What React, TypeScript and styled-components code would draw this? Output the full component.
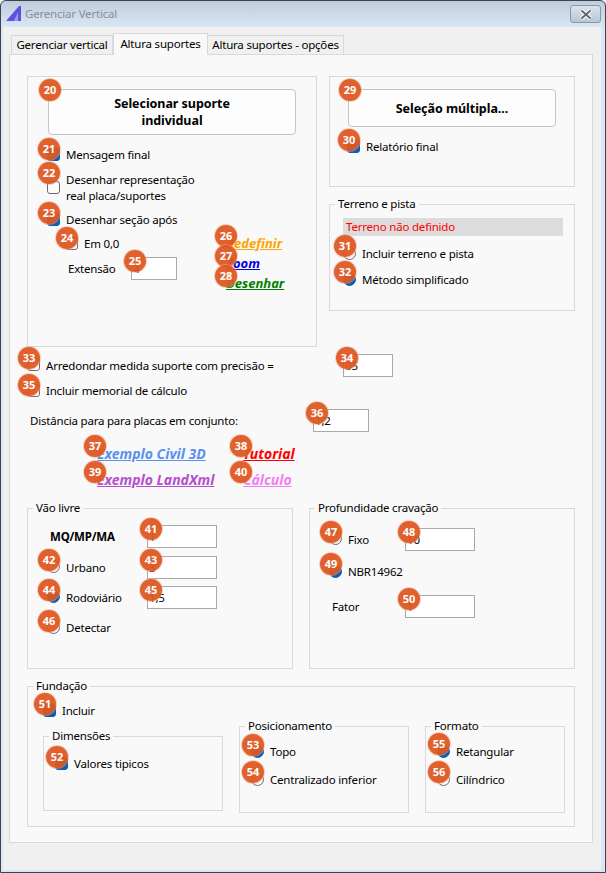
import React from "react";
import styled, { createGlobalStyle } from "styled-components";

const GlobalStyle = createGlobalStyle`
  html, body {
    margin: 0;
    padding: 0;
    background: #f0f0f0;
  }
  body {
    font-family: "Noto Sans", "Liberation Sans", sans-serif;
    font-size: 11.5px;
    letter-spacing: -0.2px;
    line-height: 16px;
    color: #000;
  }
`;

const Frame = styled.div`
  box-sizing: border-box;
  width: 606px;
  height: 873px;
  border: 1px solid #3f4349;
  border-radius: 6px 6px 0 0;
  background: linear-gradient(#bfcddd, #d9e6f3 26px);
  padding: 0 4px 2px 2px;
  display: flex;
  flex-direction: column;
  overflow: hidden;
`;

const TitleBar = styled.div`
  height: 26px;
  flex: none;
  display: flex;
  align-items: center;
  padding-left: 3px;
  color: #8b8f96;
  position: relative;
`;

const TitleText = styled.span`
  margin-left: 3px;
`;

const CloseButton = styled.button`
  position: absolute;
  right: 0;
  top: 4px;
  box-sizing: border-box;
  width: 31px;
  height: 18px;
  padding: 0;
  border: 1px solid #8a97a8;
  border-radius: 3px;
  background: linear-gradient(#dbe3ec, #b9c6d6);
  display: flex;
  align-items: center;
  justify-content: center;
`;

const Body = styled.div`
  flex: 1;
  background: #f0f0f0;
  padding: 6px 8px 0 6px;
  min-height: 0;
`;

const TabBar = styled.div`
  display: flex;
  align-items: flex-end;
  height: 21px;
  padding-left: 3px;
`;

const Tab = styled.div<{ $active?: boolean; $w: number }>`
  box-sizing: border-box;
  width: ${(p) => p.$w}px;
  height: ${(p) => (p.$active ? "22px" : "19px")};
  line-height: ${(p) => (p.$active ? "19px" : "18px")};
  text-align: center;
  border: 1px solid #d9d9d9;
  border-bottom: none;
  margin-left: ${(p) => (p.$active ? "0" : "-1px")};
  background: ${(p) => (p.$active ? "#f9f9f9" : "#f0f0f0")};
  position: relative;
  z-index: ${(p) => (p.$active ? 1 : 0)};
  margin-bottom: ${(p) => (p.$active ? "-1px" : "0")};
  white-space: nowrap;
`;

const Panel = styled.div`
  box-sizing: border-box;
  height: 789px;
  border: 1px solid #d9d9d9;
  background: #f9f9f9;
  padding: 21px 19px 0 17px;
`;

const TopRow = styled.div`
  display: flex;
  gap: 12px;
  height: 271px;
`;

const Group = styled.div<{ $w: number; $h: number; $mt?: number }>`
  box-sizing: border-box;
  position: relative;
  width: ${(p) => p.$w}px;
  height: ${(p) => p.$h}px;
  margin-top: ${(p) => p.$mt ?? 0}px;
  flex: none;
  border: 1px solid #d9d9d9;
`;

const Caption = styled.span`
  position: absolute;
  left: 5px;
  top: -9px;
  padding: 0 3px;
  background: #f9f9f9;
  white-space: nowrap;
`;

const Stack = styled.div<{ $px?: number; $pt?: number }>`
  display: flex;
  flex-direction: column;
  align-items: flex-start;
  padding: ${(p) => p.$pt ?? 0}px 0 0 ${(p) => p.$px ?? 0}px;
`;

const RightColumn = styled.div`
  display: flex;
  flex-direction: column;
  gap: 17px;
`;

const BigButton = styled.button<{ $w: number; $h: number }>`
  box-sizing: border-box;
  position: relative;
  width: ${(p) => p.$w}px;
  height: ${(p) => p.$h}px;
  margin-left: 1px;
  border: 1px solid #c4c4c4;
  border-radius: 4px;
  background: #fdfdfd;
  font: bold 12.5px/17px "Noto Sans", "Liberation Sans", sans-serif;
  letter-spacing: -0.05px;
  color: #000;
  padding: 0;
`;

const Option = styled.label<{ $mt?: number; $ml?: number }>`
  display: flex;
  align-items: center;
  gap: 6px;
  margin-top: ${(p) => p.$mt ?? 0}px;
  margin-left: ${(p) => p.$ml ?? 0}px;
  min-height: 16px;
  white-space: nowrap;
`;

const Mark = styled.span<{ $radio?: boolean; $on?: boolean }>`
  box-sizing: border-box;
  position: relative;
  display: block;
  width: 13px;
  height: 13px;
  flex: none;
  top: -1px;
  border-radius: ${(p) => (p.$radio ? "50%" : "3px")};
  border: 1px solid ${(p) => (p.$on ? "#0f5cb0" : "#6b6b6b")};
  background: ${(p) => (p.$on ? "#0f5cb0" : "#fdfdfd")};
`;

const Badge = styled.span<{ $dx?: number; $dy?: number }>`
  box-sizing: border-box;
  position: absolute;
  left: ${(p) => p.$dx ?? -10}px;
  top: ${(p) => p.$dy ?? -12}px;
  width: 22px;
  height: 22px;
  border-radius: 50%;
  background: #df5822;
  box-shadow: 0 0 0 1px rgba(240, 170, 140, 0.55);
  color: #fff;
  font: bold 11px/21px "Noto Sans", "Liberation Sans", sans-serif;
  font-style: normal;
  letter-spacing: 0;
  text-align: center;
  text-decoration: none;
  display: block;
  opacity: 0.94;
  z-index: 2;
`;

const FieldBox = styled.span<{ $w?: number }>`
  box-sizing: border-box;
  position: relative;
  display: block;
  flex: none;
  width: ${(p) => p.$w ?? 70}px;
  height: 23px;
  border: 1px solid #a9a9a9;
  background: #fff;
  padding-left: 1px;
  line-height: 21px;
`;

const Split = styled.div`
  display: flex;
  margin-top: 2px;
  width: 100%;
`;

const LinkColumn = styled.div`
  display: flex;
  flex-direction: column;
  margin-left: 49px;
  padding-top: 3px;
  align-items: flex-start;
`;

const Jump = styled.a<{ $color: string; $big?: boolean }>`
  position: relative;
  display: block;
  font-weight: bold;
  font-style: italic;
  font-size: ${(p) => (p.$big ? 14 : 13)}px;
  letter-spacing: 0;
  line-height: 20px;
  text-decoration: underline;
  color: ${(p) => p.$color};
  white-space: nowrap;
`;

const FieldRow = styled.div<{ $mt?: number; $ml?: number; $col?: number }>`
  display: grid;
  grid-template-columns: ${(p) => p.$col ?? 100}px auto;
  align-items: center;
  margin-top: ${(p) => p.$mt ?? 0}px;
  margin-left: ${(p) => p.$ml ?? 0}px;
`;

const Plain = styled.span<{ $bold?: boolean }>`
  font-weight: ${(p) => (p.$bold ? "bold" : "normal")};
  white-space: nowrap;
`;

const WarnBar = styled.div`
  box-sizing: border-box;
  height: 18px;
  width: 220px;
  margin: 13px 0 0 13px;
  padding-left: 3px;
  background: #dcdcdc;
  color: #f00;
  line-height: 18px;
`;

const Loose = styled.div`
  display: flex;
  flex-direction: column;
  align-items: flex-start;
  padding-top: 7px;
  position: relative;
`;

const LinkGrid = styled.div`
  display: grid;
  grid-template-columns: 146px auto;
  row-gap: 6px;
  margin: 12px 0 0 70px;
  justify-items: start;
`;

const ColumnsRow = styled.div<{ $mt: number }>`
  display: flex;
  gap: 16px;
  margin-top: ${(p) => p.$mt}px;
`;

const Inner = styled.div`
  display: flex;
  align-items: flex-start;
  gap: 16px;
  margin: 7px 0 0 15px;
`;

type OptProps = {
  n: number;
  label: React.ReactNode;
  radio?: boolean;
  on?: boolean;
  mt?: number;
  ml?: number;
  dy?: number;
};

// checkbox or radio with its numbered marker on top
function Opt({ n, label, radio, on, mt, ml, dy }: OptProps) {
  return (
    <Option $mt={mt} $ml={ml}>
      <Mark $radio={radio} $on={on}>
        <Badge $dy={dy}>{n}</Badge>
      </Mark>
      <span>{label}</span>
    </Option>
  );
}

function Field({ n, value, w }: { n: number; value?: string; w?: number }) {
  return (
    <FieldBox $w={w}>
      {value}
      <Badge $dx={-8} $dy={-8}>{n}</Badge>
    </FieldBox>
  );
}

export default function App() {
  return (
    <>
      <GlobalStyle />
      <Frame>
        <TitleBar>
          <svg width="16" height="16" viewBox="0 0 16 16">
            <path d="M0 15 L13 0 L15 0 L15 15 Z" fill="#5a52e0" />
            <path d="M8 15 L12 6 L12 15 Z" fill="#9c98ee" />
          </svg>
          <TitleText>Gerenciar Vertical</TitleText>
          <CloseButton aria-label="Fechar">
            <svg width="14" height="11" viewBox="0 0 14 11">
              <path d="M2.5 1.5 L11.5 9.5 M11.5 1.5 L2.5 9.5" stroke="#fff" strokeWidth="3.8" />
              <path d="M2.5 1.5 L11.5 9.5 M11.5 1.5 L2.5 9.5" stroke="#5d6672" strokeWidth="1.8" />
            </svg>
          </CloseButton>
        </TitleBar>
        <Body>
          <TabBar>
            <Tab $w={102}>Gerenciar vertical</Tab>
            <Tab $w={95} $active>Altura suportes</Tab>
            <Tab $w={137}>Altura suportes - opções</Tab>
          </TabBar>
          <Panel>
            <TopRow>
              <Group $w={290} $h={271}>
                <Stack $px={19} $pt={12}>
                  <BigButton $w={248} $h={46}>
                    Selecionar suporte
                    <br />
                    individual
                    <Badge $dx={-10} $dy={-11}>20</Badge>
                  </BigButton>
                  <Opt n={21} label="Mensagem final" on mt={12} dy={-11} />
                  <Opt
                    n={22}
                    label={
                      <>
                        Desenhar representação
                        <br />
                        real placa/suportes
                      </>
                    }
                    mt={9}
                    dy={-20}
                  />
                  <Opt n={23} label="Desenhar seção após" on mt={8} />
                  <Split>
                    <Stack $px={18}>
                      <Opt n={24} label="Em 0,0" mt={6} dy={-11} />
                      <FieldRow $mt={5} $ml={3} $col={63}>
                        <Plain>Extensão</Plain>
                        <Field n={25} w={46} value="4" />
                      </FieldRow>
                    </Stack>
                    <LinkColumn>
                      <Jump $color="#ffa500">
                        Redefinir
                        <Badge $dx={-11} $dy={-8}>26</Badge>
                      </Jump>
                      <Jump $color="#0000e0">
                        Zoom
                        <Badge $dx={-11} $dy={-8}>27</Badge>
                      </Jump>
                      <Jump $color="#008000">
                        Desenhar
                        <Badge $dx={-11} $dy={-8}>28</Badge>
                      </Jump>
                    </LinkColumn>
                  </Split>
                </Stack>
              </Group>
              <RightColumn>
                <Group $w={246} $h={111}>
                  <Stack $px={17} $pt={12}>
                    <BigButton $w={208} $h={38}>
                      Seleção múltipla...
                      <Badge $dx={-10} $dy={-11}>29</Badge>
                    </BigButton>
                    <Opt n={30} label="Relatório final" on mt={12} />
                  </Stack>
                </Group>
                <Group $w={246} $h={107}>
                  <Caption>Terreno e pista</Caption>
                  <WarnBar>Terreno não definido</WarnBar>
                  <Stack $px={13}>
                    <Opt n={31} label="Incluir terreno e pista" radio mt={10} dy={-13} />
                    <Opt n={32} label="Método simplificado" radio on mt={10} dy={-13} />
                  </Stack>
                </Group>
              </RightColumn>
            </TopRow>
            <Loose>
              <FieldRow $col={316}>
                <Opt n={33} label="Arredondar medida suporte com precisão =" />
                <Field n={34} w={50} value="05" />
              </FieldRow>
              <Opt n={35} label="Incluir memorial de cálculo" mt={6} dy={-11} />
              <FieldRow $mt={10} $ml={3} $col={283}>
                <Plain>Distância para para placas em conjunto:</Plain>
                <Field n={36} w={56} value="1,2" />
              </FieldRow>
            </Loose>
            <LinkGrid>
              <Jump $color="#5b8ff0" $big>
                Exemplo Civil 3D
                <Badge $dx={-13} $dy={-9}>37</Badge>
              </Jump>
              <Jump $color="#f00" $big>
                Tutorial
                <Badge $dx={-13} $dy={-9}>38</Badge>
              </Jump>
              <Jump $color="#b44fd0" $big>
                Exemplo LandXml
                <Badge $dx={-13} $dy={-9}>39</Badge>
              </Jump>
              <Jump $color="#f080f0" $big>
                Cálculo
                <Badge $dx={-13} $dy={-9}>40</Badge>
              </Jump>
            </LinkGrid>
            <ColumnsRow $mt={18}>
              <Group $w={266} $h={161}>
                <Caption>Vão livre</Caption>
                <Stack $px={19} $pt={16}>
                  <FieldRow $ml={3} $col={97}>
                    <Plain $bold>MQ/MP/MA</Plain>
                    <Field n={41} value="1" />
                  </FieldRow>
                  <FieldRow $mt={8} $col={100}>
                    <Opt n={42} label="Urbano" radio />
                    <Field n={43} value="3" />
                  </FieldRow>
                  <FieldRow $mt={7} $col={100}>
                    <Opt n={44} label="Rodoviário" radio on />
                    <Field n={45} value="1,5" />
                  </FieldRow>
                  <Opt n={46} label="Detectar" radio mt={11} />
                </Stack>
              </Group>
              <Group $w={266} $h={161}>
                <Caption>Profundidade cravação</Caption>
                <Stack $px={19} $pt={19}>
                  <FieldRow $col={76}>
                    <Opt n={47} label="Fixo" radio />
                    <Field n={48} value="10" />
                  </FieldRow>
                  <Opt n={49} label="NBR14962" radio on mt={13} dy={-13} />
                  <FieldRow $mt={15} $ml={3} $col={73}>
                    <Plain>Fator</Plain>
                    <Field n={50} value="1" />
                  </FieldRow>
                </Stack>
              </Group>
            </ColumnsRow>
            <ColumnsRow $mt={17}>
              <Group $w={548} $h={141}>
                <Caption>Fundação</Caption>
                <Stack $px={15} $pt={16}>
                  <Opt n={51} label="Incluir" on />
                </Stack>
                <Inner>
                  <Group $w={180} $h={75} $mt={10}>
                    <Caption>Dimensões</Caption>
                    <Stack $px={11} $pt={19}>
                      <Opt n={52} label="Valores tipicos" on />
                    </Stack>
                  </Group>
                  <Group $w={170} $h={87}>
                    <Caption>Posicionamento</Caption>
                    <Stack $px={11} $pt={17}>
                      <Opt n={53} label="Topo" radio on />
                      <Opt n={54} label="Centralizado inferior" radio mt={12} dy={-13} />
                    </Stack>
                  </Group>
                  <Group $w={140} $h={87}>
                    <Caption>Formato</Caption>
                    <Stack $px={11} $pt={17}>
                      <Opt n={55} label="Retangular" radio on dy={-13} />
                      <Opt n={56} label="Cilíndrico" radio mt={12} dy={-13} />
                    </Stack>
                  </Group>
                </Inner>
              </Group>
            </ColumnsRow>
          </Panel>
        </Body>
      </Frame>
    </>
  );
}
